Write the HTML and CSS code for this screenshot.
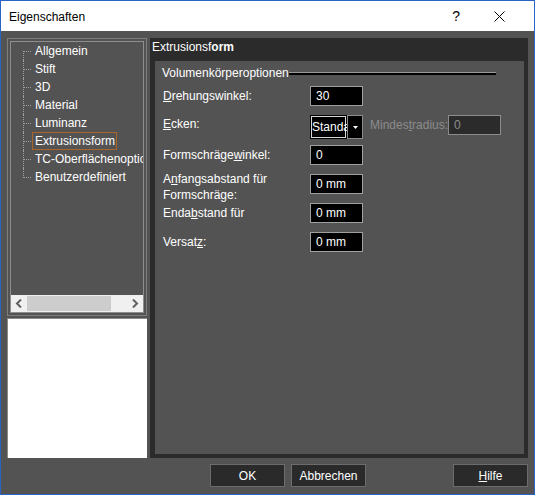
FILE: index.html
```html
<!DOCTYPE html>
<html lang="de">
<head>
  <meta charset="UTF-8">
  <title>Eigenschaften</title>
  <link rel="stylesheet" href="styles.css">
</head>
<body>
  <div class="window">
    <div class="titlebar">
      <span class="title">Eigenschaften</span>
      <span class="help">?</span>
      <svg class="close" width="11" height="11" viewBox="0 0 11 11">
        <path d="M0.5 0.5 L10.5 10.5 M10.5 0.5 L0.5 10.5" stroke="#000" stroke-width="1" fill="none"/>
      </svg>
    </div>

    <div class="content">
      <div class="main">
        <!-- Left column: category tree and preview -->
        <div class="side">
          <div class="tree">
            <div class="tree-inner">
              <ul class="tree-list">
                <li class="tree-item"><span class="branch"></span><span class="tree-label">Allgemein</span></li>
                <li class="tree-item"><span class="branch"></span><span class="tree-label">Stift</span></li>
                <li class="tree-item"><span class="branch"></span><span class="tree-label">3D</span></li>
                <li class="tree-item"><span class="branch"></span><span class="tree-label">Material</span></li>
                <li class="tree-item"><span class="branch"></span><span class="tree-label">Luminanz</span></li>
                <li class="tree-item"><span class="branch"></span><span class="tree-label selected">Extrusionsform</span></li>
                <li class="tree-item"><span class="branch"></span><span class="tree-label">TC-Oberflächenoptionen</span></li>
                <li class="tree-item"><span class="branch"></span><span class="tree-label">Benutzerdefiniert</span></li>
              </ul>
              <div class="hscroll">
                <span class="arrow">
                  <svg width="8" height="9" viewBox="0 0 8 9"><path d="M6 0.5 L2 4.5 L6 8.5" stroke="#606060" stroke-width="2" fill="none"/></svg>
                </span>
                <span class="thumb"></span>
                <span class="track"></span>
                <span class="arrow">
                  <svg width="8" height="9" viewBox="0 0 8 9"><path d="M2 0.5 L6 4.5 L2 8.5" stroke="#606060" stroke-width="2" fill="none"/></svg>
                </span>
              </div>
            </div>
          </div>
          <div class="preview"></div>
        </div>

        <!-- Right column: property page -->
        <div class="page">
          <div class="page-title">Extrusionsf<span class="heavy">orm</span></div>
          <div class="page-body">
            <div class="group-title">
              <span>Volumenkörperoptionen</span>
              <span class="group-line"></span>
            </div>

            <div class="form">
              <div class="row">
                <label class="field-label"><u>D</u>rehungswinkel:</label>
                <div class="input">30</div>
              </div>
              <div class="row row-combo">
                <label class="field-label top"><u>E</u>cken:</label>
                <div class="combo">
                  <div class="combo-text">Standard</div>
                  <div class="combo-btn">
                    <svg width="5" height="3" viewBox="0 0 5 3"><path d="M0 0 H5 L2.5 3 Z" fill="#fff"/></svg>
                  </div>
                </div>
                <span class="disabled-label">Mindes<u>t</u>radius:</span>
                <div class="input disabled">0</div>
              </div>
              <div class="row">
                <label class="field-label">Formschräge<u>w</u>inkel:</label>
                <div class="input">0</div>
              </div>
              <div class="row">
                <label class="field-label two-line">A<u>n</u>fangsabstand für<br>Formschräge:</label>
                <div class="input">0 mm</div>
              </div>
              <div class="row">
                <label class="field-label">Enda<u>b</u>stand für</label>
                <div class="input">0 mm</div>
              </div>
              <div class="row">
                <label class="field-label">Versat<u>z</u>:</label>
                <div class="input">0 mm</div>
              </div>
            </div>
          </div>
        </div>
      </div>

      <div class="buttons">
        <button class="btn btn-ok">OK</button>
        <button class="btn">Abbrechen</button>
        <button class="btn btn-help"><u>H</u>ilfe</button>
      </div>
    </div>
  </div>
</body>
</html>
```

FILE: styles.css
```css
/* Base */
body {
  margin: 0;
  font-family: "Liberation Sans", Arial, sans-serif;
  font-size: 12px;
}

/* Dialog frame */
.window {
  width: 535px;
  height: 495px;
  box-sizing: border-box;
  border: 1px solid #2b63c4;
  display: flex;
  flex-direction: column;
}

.titlebar {
  height: 30px;
  flex: none;
  background: #fff;
  display: flex;
  align-items: center;
  padding-left: 8px;
  color: #000;
}

.title {
  flex: 1;
  padding-top: 1px;
}

.help {
  font-size: 14px;
  margin-right: 34px;
}

.close {
  margin-right: 29px;
}

/* Dark body */
.content {
  flex: 1;
  background: #535353;
  padding: 7px 6px 7px 6px;
  display: flex;
  flex-direction: column;
}

.main {
  height: 420px;
  display: flex;
}

/* Left column */
.side {
  width: 140px;
  flex: none;
  display: flex;
  flex-direction: column;
  gap: 2px;
}

.tree {
  height: 278px;
  box-sizing: border-box;
  border: 1px solid #7e7e7e;
  padding: 2px;
}

.tree-inner {
  height: 100%;
  box-sizing: border-box;
  border: 1px solid #8e8e8e;
  display: flex;
  flex-direction: column;
}

.tree-list {
  flex: 1;
  list-style: none;
  margin: 0;
  padding: 0;
  overflow: hidden;
}

.tree-item {
  display: flex;
  align-items: center;
  height: 18px;
  color: #fff;
}

/* Dotted connector lines */
.branch {
  position: relative;
  width: 21px;
  height: 18px;
  flex: none;
}

.branch::before {
  content: "";
  position: absolute;
  left: 12px;
  top: 0;
  bottom: 0;
  border-left: 1px dotted #a0a0a0;
}

.tree-item:first-child .branch::before {
  top: 9px;
}

.tree-item:last-child .branch::before {
  bottom: 8px;
}

.branch::after {
  content: "";
  position: absolute;
  left: 13px;
  top: 9px;
  width: 7px;
  border-top: 1px dotted #a0a0a0;
}

.tree-label {
  border: 1px solid transparent;
  padding: 0 1px 0 2px;
  line-height: 16px;
  white-space: nowrap;
}

.tree-label.selected {
  border-color: #a9652b;
}

.hscroll {
  height: 17px;
  flex: none;
  background: #f0f0f0;
  display: flex;
  align-items: center;
}

.hscroll .arrow {
  width: 16px;
  height: 17px;
  display: flex;
  align-items: center;
  justify-content: center;
}

.hscroll .thumb {
  width: 84px;
  height: 15px;
  background: #cdcdcd;
}

.hscroll .track {
  flex: 1;
}

.preview {
  flex: 1;
  background: #fff;
  border-top: 1px solid #8a8a8a;
  border-left: 1px solid #8a8a8a;
}

/* Right column */
.page {
  flex: 1;
  margin-left: 3px;
  background: #2b2b2b;
  display: flex;
  flex-direction: column;
}

.page-title {
  height: 23px;
  line-height: 19px;
  padding-left: 2px;
  color: #fff;
}

.page-title .heavy {
  font-weight: bold;
}

.page-body {
  flex: 1;
  margin: 0 4px 4px 5px;
  background: #535353;
  padding: 5px 7px;
  color: #fff;
}

.group-title {
  display: flex;
  align-items: center;
  height: 14px;
}

.group-line {
  width: 207px;
  height: 1px;
  border-top: 1px solid #9a9a9a;
  border-bottom: 1px solid #000;
  background: #000;
}

.form {
  margin-top: 6px;
  display: flex;
  flex-direction: column;
  gap: 9px;
}

.row {
  display: flex;
  align-items: center;
  min-height: 20px;
}

.row-combo {
  align-items: flex-start;
  margin-bottom: -3px;
}

.field-label {
  width: 147px;
  padding-left: 1px;
  flex: none;
}

.field-label.top {
  padding-top: 2px;
}

.field-label.two-line {
  align-self: flex-start;
  line-height: 16px;
  margin: -3px 0 -9px 0;
}

.input {
  width: 53px;
  height: 20px;
  box-sizing: border-box;
  border: 1px solid #a0a0a0;
  background: #000;
  color: #fff;
  padding-left: 5px;
  line-height: 18px;
  flex: none;
}

.input.disabled {
  background: #2b2b2b;
  border-color: #8c8c8c;
  color: #8c8c8c;
}

.combo {
  display: flex;
  height: 24px;
  width: 53px;
  flex: none;
  margin-right: 7px;
}

/* Edit part of the combo box; the focus frame is drawn over the text */
.combo-text {
  width: 37px;
  box-sizing: border-box;
  background: #000;
  color: #fff;
  padding-left: 2px;
  line-height: 24px;
  overflow: hidden;
  white-space: nowrap;
  box-shadow: inset 0 0 0 1px #000, inset 0 0 0 2px #d8d8d8;
}

.combo-btn {
  flex: 1;
  box-sizing: border-box;
  border: 1px solid #8c8c8c;
  background: #000;
  display: flex;
  align-items: center;
  justify-content: center;
}

.disabled-label {
  width: 78px;
  color: #8c8c8c;
  line-height: 20px;
  flex: none;
}

/* Dialog buttons */
.buttons {
  margin-top: 6px;
  height: 23px;
  display: flex;
  gap: 6px;
}

.btn {
  width: 75px;
  height: 23px;
  background: #2a2a2a;
  border: 1px solid #6c6c6c;
  color: #fff;
  font-family: inherit;
  font-size: 12px;
  padding: 0;
}

.btn-ok {
  margin-left: 203px;
}

.btn-help {
  margin-left: auto;
}
```
